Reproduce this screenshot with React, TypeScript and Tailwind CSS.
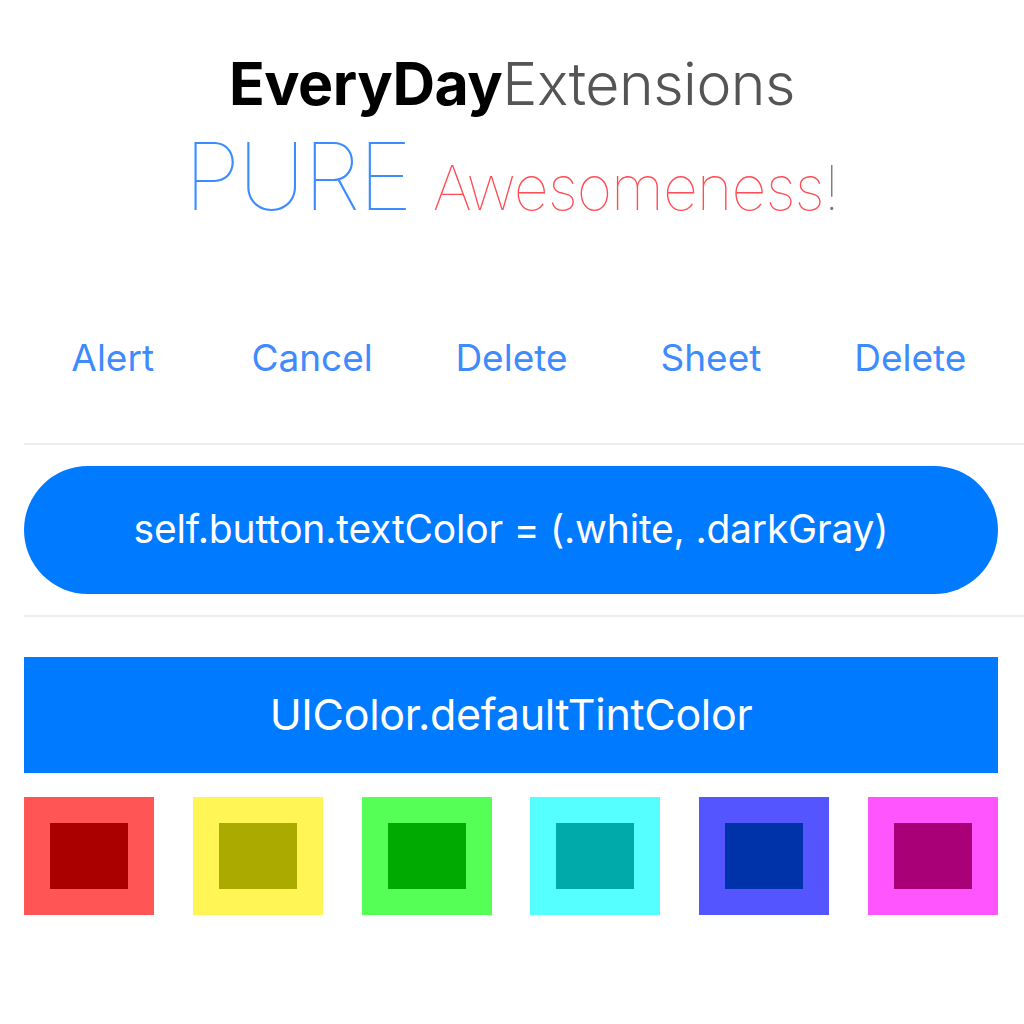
import React from 'react';

const actions = ['Alert', 'Cancel', 'Delete', 'Sheet', 'Delete'];

const swatches = [
  { outer: 'bg-[#ff5555]', inner: 'bg-[#aa0000]' },
  { outer: 'bg-[#fff555]', inner: 'bg-[#aaaa00]' },
  { outer: 'bg-[#55ff55]', inner: 'bg-[#00aa00]' },
  { outer: 'bg-[#55ffff]', inner: 'bg-[#00aaaa]' },
  { outer: 'bg-[#5555ff]', inner: 'bg-[#0033aa]' },
  { outer: 'bg-[#ff55ff]', inner: 'bg-[#aa0077]' },
];

const App: React.FC = () => {
  return (
    <div className="w-[1024px] h-[1024px] bg-white overflow-hidden font-['Inter','Liberation_Sans',sans-serif]">
      {/* Header */}
      <div className="flex flex-col items-center pt-[49px]">
        <h1 className="text-[59px] leading-[70px] tracking-[-0.5px]">
          <span className="font-bold text-black">EveryDay</span>
          <span className="font-light text-[#555555]">Extensions</span>
        </h1>
        <div className="flex items-baseline mt-[7px]">
          <span className="text-[93px] leading-[100px] font-thin text-[#3b8cff] tracking-[-2px]">PURE</span>
          <span className="ml-[22px] text-[61px] font-thin text-[#ff4d55] tracking-[-1px]">Awesomeness</span>
          <span className="text-[61px] font-thin text-[#777777]">!</span>
        </div>
      </div>

      {/* Action buttons */}
      <div className="grid grid-cols-5 pl-[13px] pr-[14px] mt-[92px] h-[62px] items-center">
        {actions.map((a, i) => (
          <div key={i} className="text-center text-[37px] text-[#3d8bfd]">
            {a}
          </div>
        ))}
      </div>

      <div className="ml-[24px] mt-[54px] h-[2px] bg-[#ececec]" />

      {/* Rounded button */}
      <div className="ml-[24px] mr-[26px] mt-[21px] h-[128px] rounded-full bg-[#007aff] flex items-center justify-center">
        <span className="text-white text-[39px] tracking-[-0.2px]">self.button.textColor = (.white, .darkGray)</span>
      </div>

      <div className="ml-[24px] mt-[21px] h-[2px] bg-[#ececec]" />

      {/* Tint color bar */}
      <div className="ml-[24px] mr-[26px] mt-[40px] h-[116px] bg-[#007aff] flex items-center justify-center">
        <span className="text-white text-[43px] tracking-[-0.3px]">UIColor.defaultTintColor</span>
      </div>

      {/* Swatches */}
      <div className="ml-[24px] mr-[26px] mt-[24px] flex justify-between">
        {swatches.map((s, i) => (
          <div key={i} className={`w-[130px] h-[118px] p-[26px] ${s.outer}`}>
            <div className={`w-full h-full ${s.inner}`} />
          </div>
        ))}
      </div>
    </div>
  );
};

export default App;
